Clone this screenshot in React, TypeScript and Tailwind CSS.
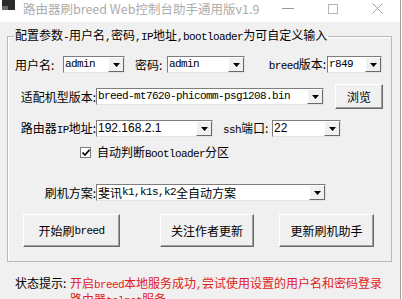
import React from 'react';

// latin bits in the old SimSun look: narrow mono
function M({ children }: { children: React.ReactNode }) {
  return <span className="font-['Liberation_Mono',monospace] text-[11px] tracking-[-0.6px]">{children}</span>;
}

function Arrow() {
  return (
    <svg width="7" height="4" viewBox="0 0 7 4">
      <polygon points="0,0 7,0 3.5,4" fill="#000" />
    </svg>
  );
}

function Combo({ w, children }: { w: string; children: React.ReactNode }) {
  return (
    <div className={`flex h-[17px] ${w} bg-white border border-t-[#7e7e7e] border-l-[#7e7e7e] border-r-[#e3e3e3] border-b-[#e3e3e3]`}>
      <div className="flex-1 flex items-center pl-[1px] overflow-hidden whitespace-nowrap leading-[15px]">{children}</div>
      <div className="w-[16px] h-full flex items-center justify-center bg-[#f0f0f0] border border-t-white border-l-white border-r-[#696969] border-b-[#696969]">
        <Arrow />
      </div>
    </div>
  );
}

function Btn({ w, h, children }: { w: string; h: string; children: React.ReactNode }) {
  return (
    <div className={`${w} ${h} flex items-center justify-center bg-[#f0f0f0] border border-t-white border-l-white border-r-[#696969] border-b-[#696969] shadow-[inset_-1px_-1px_0_#a0a0a0]`}>
      {children}
    </div>
  );
}

export default function App() {
  return (
    <div className="w-[401px] h-[299px] overflow-hidden bg-[#f0f0f0] flex flex-col border-r border-[#a0a0a0] font-['Noto_Sans_CJK_SC',sans-serif] text-[12px] leading-[16px] text-black">
      {/* Title bar */}
      <div className="h-[22px] shrink-0 bg-white flex items-start">
        <div className="ml-[2px] w-[13px] h-[10px] bg-[#2b2b2b] flex items-end">
          <div className="w-[6px] h-[4px] bg-[#6b6b6b]" />
        </div>
        <div className="ml-[8px] text-[12.5px] leading-[17px] text-[#acacac] whitespace-nowrap">路由器刷breed Web控制台助手通用版v1.9</div>
        <div className="flex-1" />
        <div className="w-[45px] h-[17px] flex items-center justify-center">
          <div className="w-[12px] h-px bg-[#9a9a9a]" />
        </div>
        <div className="w-[45px] h-[17px] flex items-center justify-center">
          <div className="w-[10px] h-[10px] border border-[#b5b5b5]" />
        </div>
        <div className="w-[45px] h-[17px] flex items-center justify-center">
          <svg width="11" height="11" viewBox="0 0 11 11">
            <path d="M0.5 0.5 L10.5 10.5 M10.5 0.5 L0.5 10.5" stroke="#a5a5a5" strokeWidth="1" />
          </svg>
        </div>
      </div>

      {/* Group box */}
      <fieldset className="ml-[7px] mt-[5px] w-[385px] pl-[6px] pb-[14px] border border-[#b9b9b9] shadow-[inset_1px_1px_0_#fff]">
        <legend className="px-[1px] whitespace-nowrap">
          配置参数<M>-</M>用户名<M>,</M>密码<M>,IP</M>地址<M>,bootloader</M>为可自定义输入
        </legend>
        <div className="pl-[1px]">
          <div className="mt-[11px] flex items-center h-[17px]">
            <div className="w-[48px]">用户名:</div>
            <Combo w="w-[62px]"><M>admin</M></Combo>
            <div className="ml-[10px] w-[32px]">密码:</div>
            <Combo w="w-[78px]"><M>admin</M></Combo>
            <div className="ml-[18px] w-[63px] text-right"><M>breed</M>版本:</div>
            <div className="ml-[1px]">
              <Combo w="w-[55px]"><M>r849</M></Combo>
            </div>
          </div>

          <div className="mt-[15px] flex items-center h-[17px]">
            <div className="w-[81px] text-right">适配机型版本:</div>
            <Combo w="w-[228px]"><M>breed-mt7620-phicomm-psg1208.bin</M></Combo>
            <div className="ml-[11px]">
              <Btn w="w-[48px]" h="h-[25px]">浏览</Btn>
            </div>
          </div>

          <div className="mt-[15px] flex items-center h-[17px]">
            <div className="w-[81px] text-right">路由器<M>IP</M>地址:</div>
            <Combo w="w-[117px]"><span className="font-['Liberation_Sans',sans-serif] text-[12px]">192.168.2.1</span></Combo>
            <div className="ml-[10px] w-[49px]"><M>ssh</M>端口:</div>
            <Combo w="w-[69px]"><span className="font-['Liberation_Sans',sans-serif] text-[12px]">22</span></Combo>
          </div>

          <div className="mt-[9px] flex items-center h-[13px]">
            <div className="ml-[65px] w-[11px] h-[11px] bg-white border border-[#7a7a7a] flex items-center justify-center">
              <svg width="8" height="7" viewBox="0 0 8 7">
                <path d="M0.5 3.5 L3 6 L7.5 0.8" stroke="#000" strokeWidth="1.6" fill="none" />
              </svg>
            </div>
            <div className="ml-[6px] whitespace-nowrap">自动判断<M>Bootloader</M>分区</div>
          </div>

          <div className="mt-[25px] flex items-center h-[17px]">
            <div className="w-[81px] text-right">刷机方案:</div>
            <Combo w="w-[230px]">斐讯<M>k1,k1s,k2</M>全自动方案</Combo>
          </div>

          <div className="mt-[13px] flex items-center">
            <div className="ml-[8px]">
              <Btn w="w-[97px]" h="h-[33px]">开始刷<M>breed</M></Btn>
            </div>
            <div className="ml-[40px]">
              <Btn w="w-[94px]" h="h-[33px]">关注作者更新</Btn>
            </div>
            <div className="ml-[25px]">
              <Btn w="w-[95px]" h="h-[33px]">更新刷机助手</Btn>
            </div>
          </div>
        </div>
      </fieldset>

      {/* Status */}
      <div className="mt-[14px] ml-[15px] flex items-start leading-[13px]">
        <div className="w-[55px] shrink-0">状态提示:</div>
        <div className="text-[#e02020] whitespace-nowrap">
          开启<M>breed</M>本地服务成功<M>,</M>尝试使用设置的用户名和密码登录
          <br />
          路由器<M>telnet</M>服务
        </div>
      </div>
    </div>
  );
}
